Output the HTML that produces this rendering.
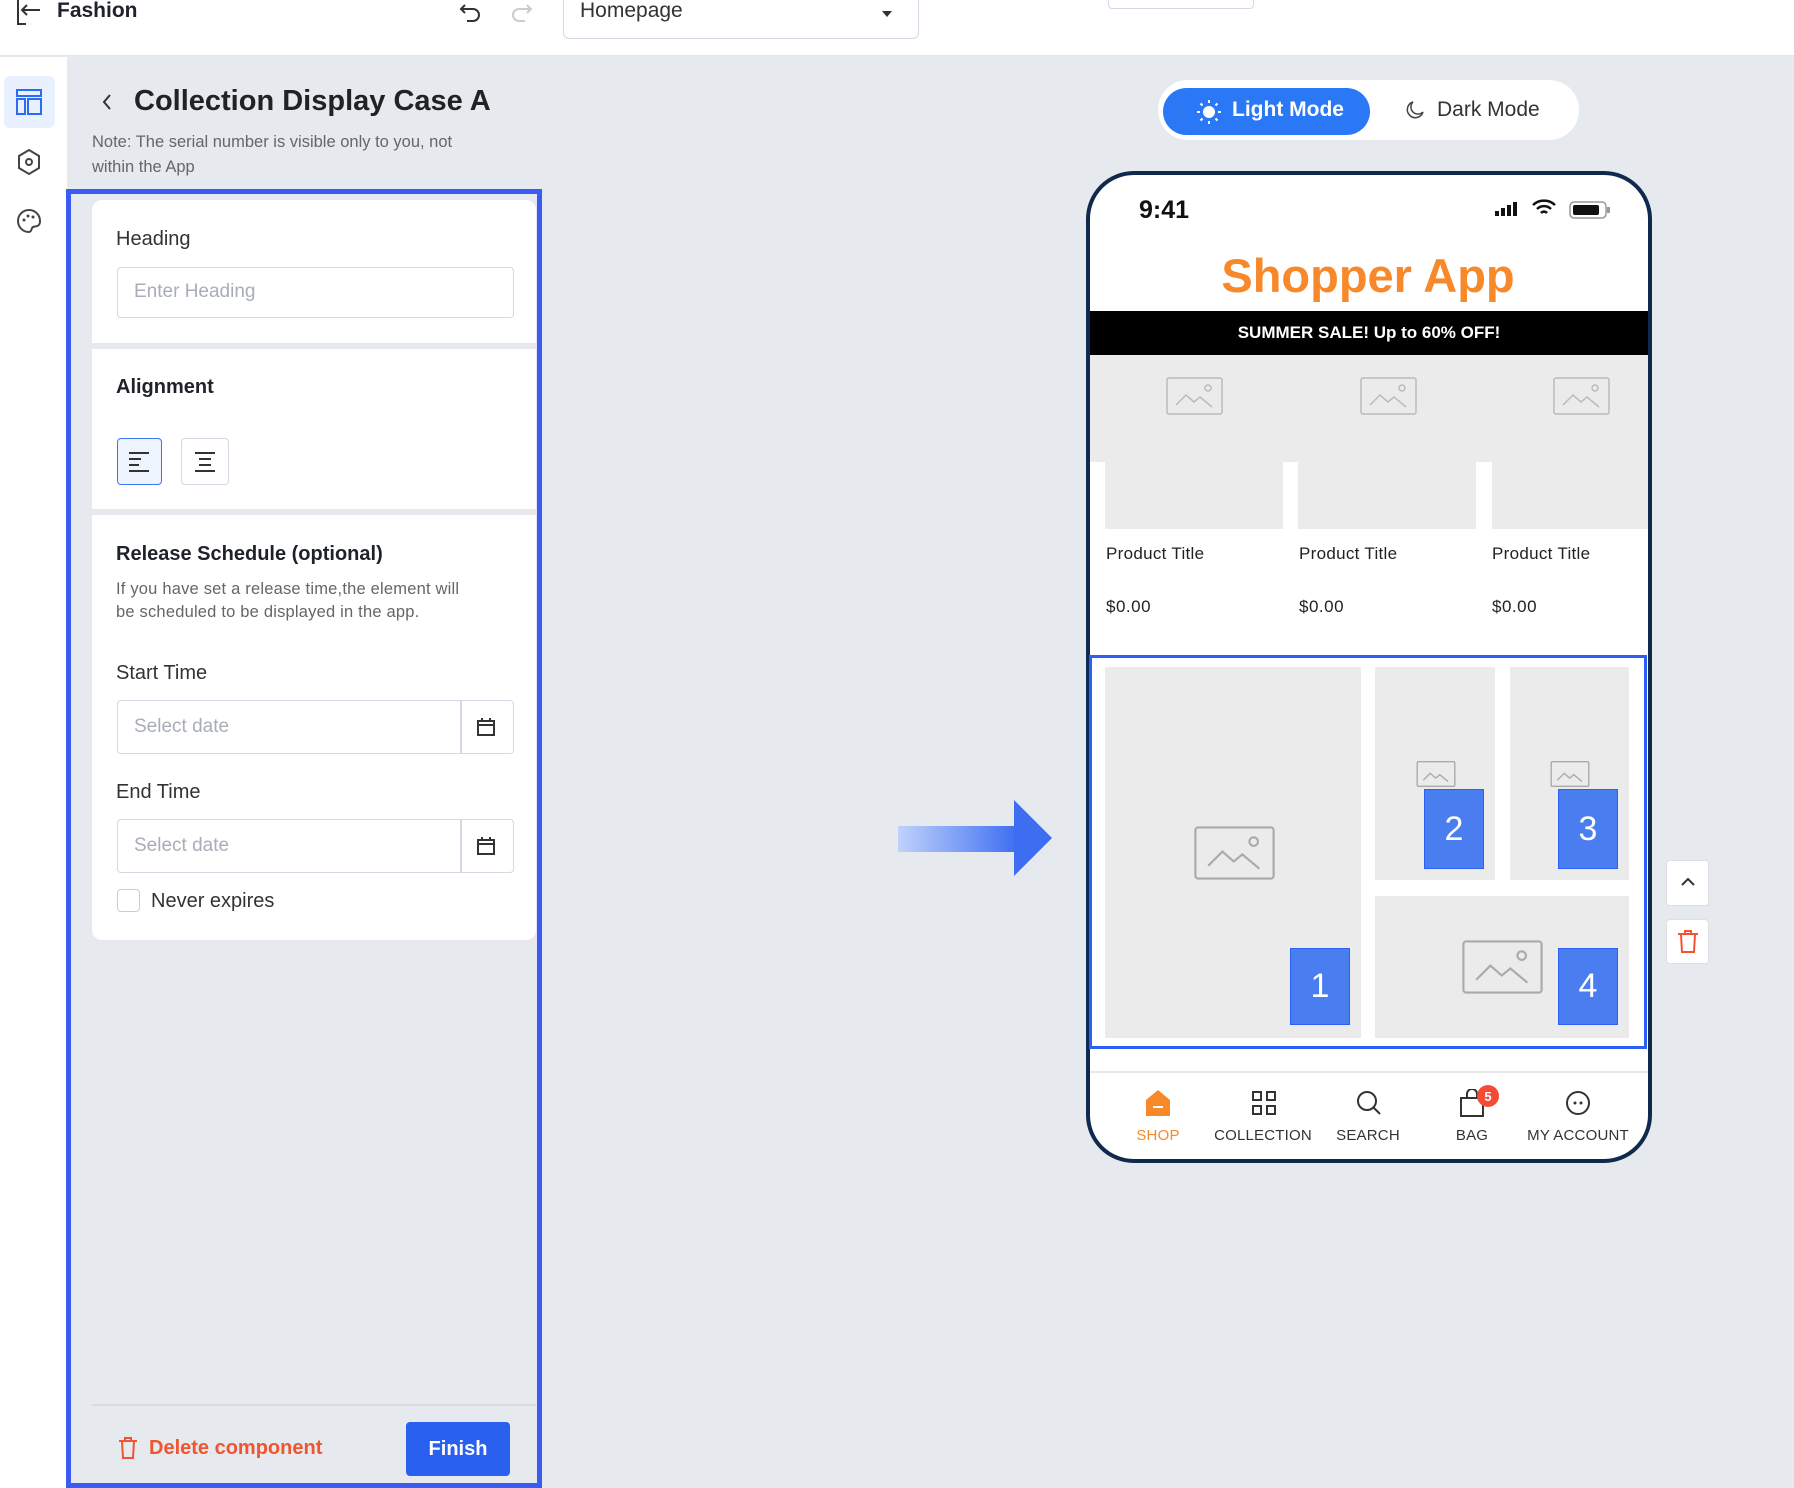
<!DOCTYPE html>
<html><head><style>
*{margin:0;padding:0;box-sizing:border-box}
body{width:1794px;height:1488px;position:relative;overflow:hidden;background:#e6e9ee;font-family:"Liberation Sans",sans-serif;color:#1f2329}
.a{position:absolute}
.t{position:absolute;white-space:nowrap}
.inp{position:absolute;border:1.5px solid #d4d8e2;border-radius:4px;background:#fff}
.ph{color:#a8adb8;font-size:19px}
.tile{position:absolute;background:#ebebeb}
.num{position:absolute;background:#4a7ef0;border:1.5px solid #2b5ff5;color:#fff;font-size:34px;display:flex;align-items:center;justify-content:center}
.nl{position:absolute;font-size:15px;color:#333;transform:translateX(-50%);letter-spacing:.2px}
</style></head><body>
<div class="a" style="left:0;top:0;width:1794px;height:56px;background:#fff;border-bottom:1px solid #e3e5ea"></div>
<svg class="a" style="left:14px;top:0" width="30" height="26" viewBox="0 0 30 26"><path d="M4 0V24H12M26 10H8M13 5L8 10L13 15" fill="none" stroke="#333" stroke-width="2"/></svg>
<div class="t" style="left:57px;top:-1px;font-size:21px;font-weight:bold">Fashion</div>
<svg class="a" style="left:458px;top:0" width="26" height="26" viewBox="0 0 26 26"><path d="M7 5L3 9L7 13M3 9H15A6 6 0 0 1 15 21H9" fill="none" stroke="#333" stroke-width="2"/></svg>
<svg class="a" style="left:508px;top:0" width="26" height="26" viewBox="0 0 26 26"><path d="M19 5L23 9L19 13M23 9H11A6 6 0 0 0 11 21H17" fill="none" stroke="#ccc" stroke-width="2"/></svg>
<div class="a" style="left:563px;top:-10px;width:356px;height:49px;border:1.5px solid #d4d8e2;border-radius:6px;background:#fff"></div>
<div class="t" style="left:580px;top:-1px;font-size:21px;color:#333">Homepage</div>
<div class="a" style="left:882px;top:11px;border:5px solid transparent;border-top:6px solid #333"></div>
<div class="a" style="left:1108px;top:-10px;width:146px;height:19px;border:1.5px solid #d4d8e2;border-radius:4px;background:#fff"></div>
<div class="a" style="left:0;top:57px;width:67px;height:1431px;background:#fff"></div>
<div class="a" style="left:4px;top:76px;width:51px;height:52px;background:#eaf1fe;border-radius:6px"></div>
<svg class="a" style="left:16px;top:89px" width="26" height="26" viewBox="0 0 26 26"><path d="M1 1H25V7H1ZM1 10H9V25H1ZM12 10H25V25H12Z" fill="none" stroke="#2a6af5" stroke-width="2"/></svg>
<svg class="a" style="left:16px;top:148px" width="26" height="28" viewBox="0 0 26 28"><path d="M13 2L23 8V20L13 26L3 20V8Z" fill="none" stroke="#444" stroke-width="2"/><circle cx="13" cy="14" r="3" fill="none" stroke="#444" stroke-width="2"/></svg>
<svg class="a" style="left:16px;top:208px" width="26" height="26" viewBox="0 0 26 26"><path d="M13 2A11 11 0 1 0 13 24C16 24 15 20 17 19C20 18 24 19 24 13A11 11 0 0 0 13 2Z" fill="none" stroke="#444" stroke-width="2"/><circle cx="8" cy="12" r="1.5" fill="#444"/><circle cx="12" cy="8" r="1.5" fill="#444"/><circle cx="17" cy="9" r="1.5" fill="#444"/></svg>
<svg class="a" style="left:100px;top:92px" width="14" height="20" viewBox="0 0 14 20"><path d="M10 3L4 10L10 17" fill="none" stroke="#333" stroke-width="2"/></svg>
<div class="t" style="left:134px;top:85px;font-size:29px;font-weight:bold;color:#222">Collection Display Case A</div>
<div class="t" style="left:92px;top:130px;font-size:16.5px;color:#666;line-height:25px">Note: The serial number is visible only to you, not<br>within the App</div>
<div class="a" style="left:66px;top:189px;width:476px;height:1299px;border:5px solid #3a5cf5"></div>
<div class="a" style="left:92px;top:200px;width:444px;height:740px;background:#fff;border-radius:10px"></div>
<div class="a" style="left:92px;top:343px;width:444px;height:6px;background:#e6e9ee"></div>
<div class="a" style="left:92px;top:509px;width:444px;height:6px;background:#e6e9ee"></div>
<div class="t" style="left:116px;top:228px;font-size:20px;color:#333">Heading</div>
<div class="inp" style="left:117px;top:267px;width:397px;height:51px"></div>
<div class="t ph" style="left:134px;top:281px">Enter Heading</div>
<div class="t" style="left:116px;top:376px;font-size:20px;font-weight:bold">Alignment</div>
<div class="a" style="left:117px;top:438px;width:45px;height:47px;border:1.5px solid #3a78f0;background:#eef4fe;border-radius:4px"></div>
<svg class="a" style="left:127px;top:450px" width="24" height="24" viewBox="0 0 24 24"><path d="M2 3H22M2 9H14M2 15H12M2 21H22" stroke="#333" stroke-width="2"/></svg>
<div class="a" style="left:181px;top:438px;width:48px;height:47px;border:1.5px solid #d4d8e2;border-radius:4px"></div>
<svg class="a" style="left:193px;top:450px" width="24" height="24" viewBox="0 0 24 24"><path d="M2 3H22M6 9H18M6 15H18M2 21H22" stroke="#333" stroke-width="2"/></svg>
<div class="t" style="left:116px;top:543px;font-size:20px;font-weight:bold">Release Schedule (optional)</div>
<div class="t" style="left:116px;top:578px;font-size:16.5px;color:#666;line-height:23px;letter-spacing:.2px">If you have set a release time,the element will<br>be scheduled to be displayed in the app.</div>
<div class="t" style="left:116px;top:662px;font-size:20px;color:#333">Start Time</div>
<div class="inp" style="left:117px;top:700px;width:397px;height:54px"></div>
<div class="a" style="left:460px;top:701px;width:1.5px;height:52px;background:#d4d8e2"></div>
<div class="t ph" style="left:134px;top:716px">Select date</div>
<svg class="a" style="left:476px;top:717px" width="20" height="20" viewBox="0 0 20 20"><path d="M2 4H18V18H2ZM2 8H18M6 1V5M14 1V5" fill="none" stroke="#333" stroke-width="2"/></svg>
<div class="t" style="left:116px;top:781px;font-size:20px;color:#333">End Time</div>
<div class="inp" style="left:117px;top:819px;width:397px;height:54px"></div>
<div class="a" style="left:460px;top:820px;width:1.5px;height:52px;background:#d4d8e2"></div>
<div class="t ph" style="left:134px;top:835px">Select date</div>
<svg class="a" style="left:476px;top:836px" width="20" height="20" viewBox="0 0 20 20"><path d="M2 4H18V18H2ZM2 8H18M6 1V5M14 1V5" fill="none" stroke="#333" stroke-width="2"/></svg>
<div class="a" style="left:117px;top:889px;width:23px;height:23px;border:1.5px solid #c8ccd6;border-radius:4px;background:#fff"></div>
<div class="t" style="left:151px;top:890px;font-size:20px;color:#333">Never expires</div>
<div class="a" style="left:92px;top:1404px;width:444px;height:1.5px;background:#d8dbe2"></div>
<svg class="a" style="left:118px;top:1437px" width="20" height="22" viewBox="0 0 20 22"><path d="M1 4H19M7 4V1H13V4M4 4L5 21H15L16 4" fill="none" stroke="#f0552f" stroke-width="2"/></svg>
<div class="t" style="left:149px;top:1437px;font-size:20px;color:#f0552f;font-weight:bold">Delete component</div>
<div class="a" style="left:406px;top:1422px;width:104px;height:54px;background:#2a60f0;border-radius:4px;color:#fff;font-size:20px;font-weight:bold;display:flex;align-items:center;justify-content:center">Finish</div>
<div class="a" style="left:898px;top:826px;width:120px;height:26px;background:linear-gradient(90deg,#bfd2fb,#3d6ef2)"></div>
<svg class="a" style="left:1014px;top:800px" width="40" height="76" viewBox="0 0 40 76"><path d="M0 0L38 38L0 76Z" fill="#3d6ef2"/></svg>
<div class="a" style="left:1158px;top:80px;width:421px;height:60px;background:#fff;border-radius:30px"></div>
<div class="a" style="left:1163px;top:88px;width:207px;height:47px;background:#2a78f5;border-radius:24px"></div>
<svg class="a" style="left:1196px;top:99px" width="26" height="26" viewBox="0 0 26 26"><circle cx="13" cy="13" r="6" fill="#fff"/><path d="M13 1V4M13 22V25M1 13H4M22 13H25M4.5 4.5L6.5 6.5M19.5 19.5L21.5 21.5M4.5 21.5L6.5 19.5M19.5 6.5L21.5 4.5" stroke="#fff" stroke-width="2"/></svg>
<div class="t" style="left:1232px;top:98px;font-size:21px;color:#fff;font-weight:bold">Light Mode</div>
<svg class="a" style="left:1405px;top:100px" width="20" height="20" viewBox="0 0 20 20"><path d="M8 2A8 8 0 1 0 18 12A7 7 0 0 1 8 2Z" fill="none" stroke="#444" stroke-width="1.5"/></svg>
<div class="t" style="left:1437px;top:98px;font-size:21px;color:#333">Dark Mode</div>
<div class="a" style="left:1086px;top:171px;width:566px;height:992px;border:4px solid #0f2a4c;border-radius:48px;background:#fff"></div>
<div class="t" style="left:1139px;top:196px;font-size:25px;font-weight:bold;color:#111">9:41</div>
<svg class="a" style="left:1495px;top:201px" width="26" height="16" viewBox="0 0 26 16"><rect x="0" y="10" width="4" height="5" fill="#111"/><rect x="6" y="7" width="4" height="8" fill="#111"/><rect x="12" y="4" width="4" height="11" fill="#111"/><rect x="18" y="1" width="4" height="14" fill="#111"/></svg>
<svg class="a" style="left:1531px;top:198px" width="26" height="20" viewBox="0 0 26 20"><path d="M2 7A16 16 0 0 1 24 7M6 11A10 10 0 0 1 20 11M10 15A4 4 0 0 1 16 15" fill="none" stroke="#111" stroke-width="2.5"/></svg>
<svg class="a" style="left:1569px;top:201px" width="42" height="18" viewBox="0 0 42 18"><rect x="1" y="1" width="36" height="16" rx="4" fill="none" stroke="#999" stroke-width="1.5"/><rect x="4" y="4" width="26" height="10" rx="2" fill="#111"/><rect x="38" y="6" width="3" height="6" fill="#999"/></svg>
<div class="t" style="left:1368px;top:248px;transform:translateX(-50%);font-size:47px;font-weight:bold;color:#f7892b">Shopper App</div>
<div class="a" style="left:1090px;top:311px;width:558px;height:44px;background:#000;color:#fff;font-size:17px;font-weight:bold;display:flex;align-items:center;justify-content:center">SUMMER SALE! Up to 60% OFF!</div>
<div class="a" style="left:1090px;top:355px;width:558px;height:107px;background:#ebebeb"></div>
<div class="a" style="left:1105px;top:355px;width:178px;height:174px;background:#ebebeb"></div>
<div class="a" style="left:1298px;top:355px;width:178px;height:174px;background:#ebebeb"></div>
<div class="a" style="left:1492px;top:355px;width:156px;height:174px;background:#ebebeb"></div>
<svg class="a" style="left:1166px;top:377px" width="57" height="38" viewBox="0 0 57 38"><rect x="1" y="1" width="55" height="36" rx="2" fill="none" stroke="#bbb" stroke-width="1.5"/><path d="M10 28L20 18L28 25L34 20L46 30" fill="none" stroke="#bbb" stroke-width="1.5"/><circle cx="42" cy="11" r="3" fill="none" stroke="#bbb" stroke-width="1.5"/></svg>
<svg class="a" style="left:1360px;top:377px" width="57" height="38" viewBox="0 0 57 38"><rect x="1" y="1" width="55" height="36" rx="2" fill="none" stroke="#bbb" stroke-width="1.5"/><path d="M10 28L20 18L28 25L34 20L46 30" fill="none" stroke="#bbb" stroke-width="1.5"/><circle cx="42" cy="11" r="3" fill="none" stroke="#bbb" stroke-width="1.5"/></svg>
<svg class="a" style="left:1553px;top:377px" width="57" height="38" viewBox="0 0 57 38"><rect x="1" y="1" width="55" height="36" rx="2" fill="none" stroke="#bbb" stroke-width="1.5"/><path d="M10 28L20 18L28 25L34 20L46 30" fill="none" stroke="#bbb" stroke-width="1.5"/><circle cx="42" cy="11" r="3" fill="none" stroke="#bbb" stroke-width="1.5"/></svg>
<div class="t" style="left:1106px;top:544px;font-size:17px;color:#222;letter-spacing:.3px">Product Title</div>
<div class="t" style="left:1299px;top:544px;font-size:17px;color:#222;letter-spacing:.3px">Product Title</div>
<div class="t" style="left:1492px;top:544px;font-size:17px;color:#222;letter-spacing:.3px">Product Title</div>
<div class="t" style="left:1106px;top:597px;font-size:17px;color:#222;letter-spacing:.5px">$0.00</div>
<div class="t" style="left:1299px;top:597px;font-size:17px;color:#222;letter-spacing:.5px">$0.00</div>
<div class="t" style="left:1492px;top:597px;font-size:17px;color:#222;letter-spacing:.5px">$0.00</div>
<div class="a" style="left:1089px;top:655px;width:558px;height:394px;border:3px solid #2b5ff5"></div>
<div class="tile" style="left:1105px;top:667px;width:256px;height:371px"></div>
<div class="tile" style="left:1375px;top:667px;width:120px;height:213px"></div>
<div class="tile" style="left:1510px;top:667px;width:119px;height:213px"></div>
<div class="tile" style="left:1375px;top:896px;width:254px;height:142px"></div>
<svg class="a" style="left:1194px;top:826px" width="81" height="54" viewBox="0 0 57 38"><rect x="1" y="1" width="55" height="36" rx="2" fill="none" stroke="#aaa" stroke-width="1.5"/><path d="M10 28L20 18L28 25L34 20L46 30" fill="none" stroke="#aaa" stroke-width="1.5"/><circle cx="42" cy="11" r="3" fill="none" stroke="#aaa" stroke-width="1.5"/></svg>
<svg class="a" style="left:1416px;top:761px" width="40" height="26" viewBox="0 0 57 38"><rect x="1" y="1" width="55" height="36" rx="2" fill="none" stroke="#aaa" stroke-width="2"/><path d="M10 28L20 18L28 25L34 20L46 30" fill="none" stroke="#aaa" stroke-width="2"/></svg>
<svg class="a" style="left:1550px;top:761px" width="40" height="26" viewBox="0 0 57 38"><rect x="1" y="1" width="55" height="36" rx="2" fill="none" stroke="#aaa" stroke-width="2"/><path d="M10 28L20 18L28 25L34 20L46 30" fill="none" stroke="#aaa" stroke-width="2"/></svg>
<svg class="a" style="left:1462px;top:940px" width="81" height="54" viewBox="0 0 57 38"><rect x="1" y="1" width="55" height="36" rx="2" fill="none" stroke="#aaa" stroke-width="1.5"/><path d="M10 28L20 18L28 25L34 20L46 30" fill="none" stroke="#aaa" stroke-width="1.5"/><circle cx="42" cy="11" r="3" fill="none" stroke="#aaa" stroke-width="1.5"/></svg>
<div class="num" style="left:1290px;top:948px;width:60px;height:77px">1</div>
<div class="num" style="left:1424px;top:789px;width:60px;height:80px">2</div>
<div class="num" style="left:1558px;top:789px;width:60px;height:80px">3</div>
<div class="num" style="left:1558px;top:948px;width:60px;height:77px">4</div>
<div class="a" style="left:1090px;top:1071px;width:558px;height:1.5px;background:#e8e8e8"></div>
<svg class="a" style="left:1145px;top:1089px" width="26" height="28" viewBox="0 0 26 28"><path d="M13 1L25 11V27H1V11Z" fill="#f7892b"/><rect x="8" y="17" width="10" height="2" fill="#fff"/></svg>
<svg class="a" style="left:1251px;top:1090px" width="26" height="26" viewBox="0 0 26 26"><path d="M2 2H10V10H2ZM16 2H24V10H16ZM2 16H10V24H2ZM16 16H24V24H16Z" fill="none" stroke="#333" stroke-width="2"/></svg>
<svg class="a" style="left:1355px;top:1089px" width="28" height="28" viewBox="0 0 28 28"><circle cx="12" cy="12" r="9" fill="none" stroke="#333" stroke-width="2"/><path d="M19 19L25 25" stroke="#333" stroke-width="2"/></svg>
<svg class="a" style="left:1459px;top:1089px" width="26" height="28" viewBox="0 0 26 28"><path d="M2 9H24V27H2ZM8 9V5A5 5 0 0 1 18 5V9" fill="none" stroke="#333" stroke-width="2"/></svg>
<div class="a" style="left:1477px;top:1085px;width:22px;height:22px;border-radius:50%;background:#f44b36;color:#fff;font-size:13px;font-weight:bold;display:flex;align-items:center;justify-content:center">5</div>
<svg class="a" style="left:1564px;top:1089px" width="28" height="28" viewBox="0 0 28 28"><circle cx="14" cy="14" r="11" fill="none" stroke="#333" stroke-width="2"/><circle cx="11" cy="14" r="1.5" fill="#333"/><circle cx="17" cy="14" r="1.5" fill="#333"/></svg>
<div class="nl" style="left:1158px;top:1127px;color:#f7892b">SHOP</div>
<div class="nl" style="left:1263px;top:1127px">COLLECTION</div>
<div class="nl" style="left:1368px;top:1127px">SEARCH</div>
<div class="nl" style="left:1472px;top:1127px">BAG</div>
<div class="nl" style="left:1578px;top:1127px">MY ACCOUNT</div>
<div class="a" style="left:1666px;top:860px;width:43px;height:46px;background:#fff;border:1px solid #dde0e6;border-radius:4px"></div>
<svg class="a" style="left:1679px;top:875px" width="18" height="14" viewBox="0 0 18 14"><path d="M3 10L9 4L15 10" fill="none" stroke="#333" stroke-width="2"/></svg>
<div class="a" style="left:1666px;top:919px;width:43px;height:45px;background:#fff;border:1px solid #dde0e6;border-radius:4px"></div>
<svg class="a" style="left:1677px;top:929px" width="22" height="24" viewBox="0 0 22 24"><path d="M1 5H21M8 5V2H14V5M4 5L5 23H17L18 5" fill="none" stroke="#f0552f" stroke-width="2"/></svg>
</body></html>
